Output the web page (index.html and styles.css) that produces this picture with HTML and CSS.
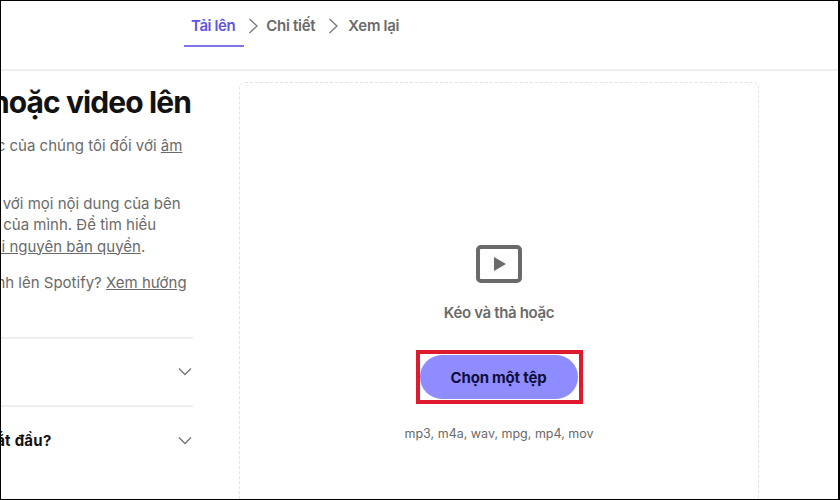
FILE: index.html
```html
<!DOCTYPE html>
<html lang="vi">
<head>
    <meta charset="UTF-8">
    <title>Tải lên</title>
    <link rel="stylesheet" href="styles.css">
</head>
<body>

<div class="page">
    <div class="steps">
        <div class="step active">Tải lên</div>
        <svg class="sep" viewBox="0 0 10 16"><path d="M1.5 1 L9 8 L1.5 15"/></svg>
        <div class="step">Chi tiết</div>
        <svg class="sep" viewBox="0 0 10 16"><path d="M1.5 1 L9 8 L1.5 15"/></svg>
        <div class="step">Xem lại</div>
    </div>

    <div class="main">
        <div class="left">
            <div class="left-inner">
                <h1>Tải âm thanh hoặc video lên</h1>
                <p>Đảm bảo tuân thủ các quy tắc của chúng tôi đối với <a>âm</a><br><a>nhạc</a>.</p>
                <p>Bạn cần có quyền sở hữu đối với mọi nội dung của bên<br>thứ ba bạn sử dụng trong tập của mình. Để tìm hiểu<br>thêm quy tắc, vui lòng xem <a>tài nguyên bản quyền</a>.</p>
                <p>Bạn vừa mới đăng chương trình lên Spotify? <a>Xem hướng</a></p>
                <div class="faq first">
                    <span></span>
                    <svg class="chev" viewBox="0 0 14 9"><path d="M1 1.5 L7 7.5 L13 1.5"/></svg>
                </div>
                <div class="faq">
                    <span>Phải chuẩn bị gì trước khi bắt đầu?</span>
                    <svg class="chev" viewBox="0 0 14 9"><path d="M1 1.5 L7 7.5 L13 1.5"/></svg>
                </div>
            </div>
        </div>

        <div class="drop">
            <svg class="video-icon" viewBox="0 0 46 38">
                <rect x="2" y="2" width="42" height="34" rx="3"/>
                <path class="play" d="M18 12 L30 19 L18 26 Z"/>
            </svg>
            <div class="drop-text">Kéo và thả hoặc</div>
            <div class="highlight">
                <button class="pick">Chọn một tệp</button>
            </div>
            <div class="formats">mp3, m4a, wav, mpg, mp4, mov</div>
        </div>
    </div>
</div>

</body>
</html>
```

FILE: styles.css
```css
html, body { margin: 0; padding: 0; background: #fff; }
body { font-family: "Inter", "Noto Sans", sans-serif; }
.page { width: 840px; height: 500px; box-sizing: border-box; border: 1px solid #000; border-right-width: 2px; overflow: hidden; background: #fff; }

.steps { display: flex; align-items: flex-start; height: 70px; box-sizing: border-box; padding-left: 183px; border-bottom: 2px solid #eee; }
.step { font-size: 15px; font-weight: 600; letter-spacing: -0.3px; color: #6a6a6a; height: 45px; line-height: 50px; }
.step.active { color: #5f56e0; padding: 0 9px 0 7px; letter-spacing: -0.4px; border-bottom: 2px solid #7d74ea; box-sizing: content-box; height: 44px; }
.sep { width: 10px; height: 16px; margin: 17px 10px 0 13px; fill: none; stroke: #777; stroke-width: 1.3; }
.sep:first-of-type { margin: 17px 8px 0 4px; }

.main { display: flex; gap: 46px; padding-top: 11px; }
.left { flex: 0 0 192px; overflow: hidden; }
.left-inner { width: 400px; margin-left: -208px; }
h1 { margin: 3px 0 16px; padding-right: 2px; font-size: 30px; line-height: 34px; font-weight: 700; letter-spacing: -0.9px; color: #121212; white-space: nowrap; text-align: right; }
p { margin: 0 0 14.5px; font-size: 15px; line-height: 21.5px; color: #6a6a6a; white-space: nowrap; }
a { text-decoration: underline; }

.faq { display: flex; justify-content: space-between; align-items: center; height: 66.5px; border-top: 2px solid #eee; font-size: 15px; font-weight: 700; letter-spacing: 0.25px; color: #121212; padding-right: 1px; white-space: nowrap; }
.faq.first { margin-top: 43.5px; }
.chev { width: 14px; height: 9px; fill: none; stroke: #777; stroke-width: 1.4; }

.drop { flex: 0 0 520px; height: 500px; box-sizing: border-box; border: 1px dashed #e2e2e2; border-radius: 6px; display: flex; flex-direction: column; align-items: center; padding-top: 162px; }
.video-icon { width: 46px; height: 38px; }
.video-icon rect { fill: none; stroke: #6a6a6a; stroke-width: 4; }
.video-icon .play { fill: #6a6a6a; }
.drop-text { margin-top: 20px; font-size: 15px; line-height: 20px; font-weight: 600; letter-spacing: -0.35px; color: #6a6a6a; }
.highlight { margin-top: 27px; padding: 1px 1px 1px 0; border: 4px solid #dd1a2e; width: 167px; height: 54px; box-sizing: border-box; }
.pick { display: block; width: 100%; height: 44px; border: none; border-radius: 22px; background: #8f8cff; color: #100f3a; font-family: inherit; font-size: 15px; font-weight: 700; letter-spacing: -0.2px; cursor: pointer; padding: 0; }
.formats { margin-top: 21px; font-size: 12.5px; line-height: 18px; color: #6a6a6a; }
```
